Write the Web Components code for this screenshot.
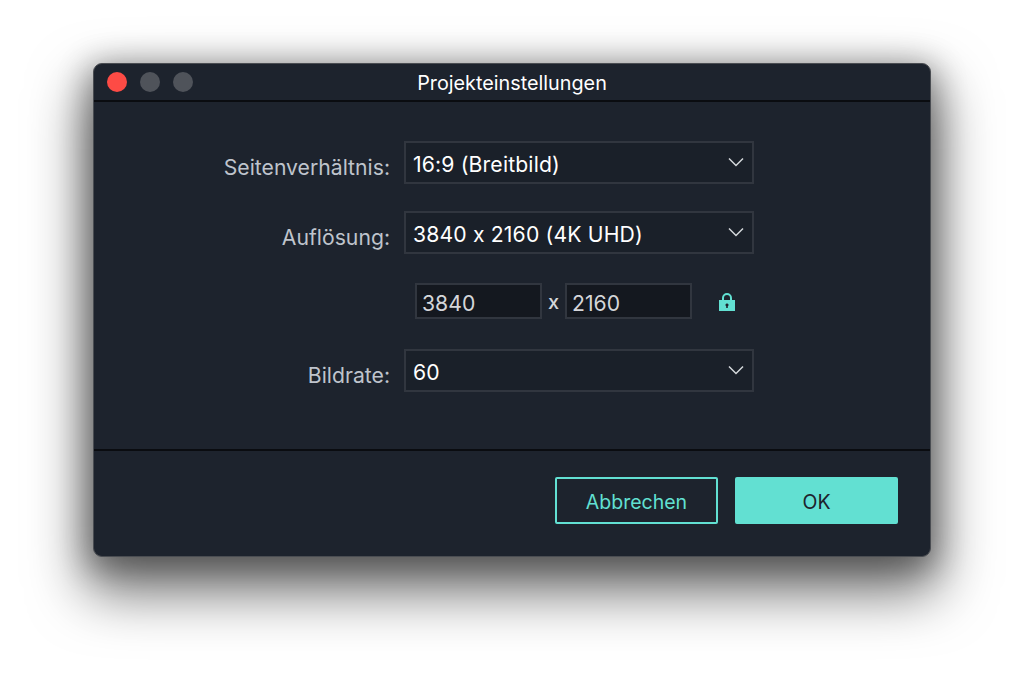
<!DOCTYPE html>
<html lang="de">
<head>
<meta charset="utf-8">
<title>Projekteinstellungen</title>
<style>
  html, body { margin: 0; height: 100%; background: #fff; }
  body { font-family: Inter, "Noto Sans", sans-serif; font-variant-ligatures: no-contextual; overflow: hidden; }
</style>
</head>
<body>
<settings-window title-text="Projekteinstellungen">
  <form-row label="Seitenverhältnis:"><select-box>16:9 (Breitbild)</select-box></form-row>
  <form-row label="Auflösung:"><select-box>3840 x 2160 (4K UHD)</select-box></form-row>
  <size-row width-value="3840" height-value="2160"></size-row>
  <form-row label="Bildrate:"><select-box>60</select-box></form-row>
  <dialog-button slot="footer">Abbrechen</dialog-button>
  <dialog-button slot="footer" primary>OK</dialog-button>
</settings-window>

<script>
class SettingsWindow extends HTMLElement {
  connectedCallback() {
    this.attachShadow({ mode: "open" });
    this.shadowRoot.innerHTML = `
      <style>
        :host { display: block; padding: 63px 93px 0; }
        .win {
          width: 838px; height: 494px; box-sizing: border-box;
          display: flex; flex-direction: column;
          background: #1d232d; color: #fff;
          border-radius: 9px;
          border: 1px solid #4a4d52;
          box-shadow: 0 28px 55px 8px rgba(0,0,0,.55), 0 6px 30px 6px rgba(0,0,0,.3);
          overflow: hidden;
        }
        .bar {
          height: 36px; flex: none; position: relative; box-sizing: content-box;
          display: flex; align-items: center; justify-content: center;
          border-bottom: 2px solid #0a0c10;
          font-size: 19.8px;
        }
        .bar span { padding-top: 2px; }
        .lights { position: absolute; left: 13px; top: 8px; display: flex; gap: 13px; }
        .lights i { width: 20px; height: 20px; border-radius: 50%; background: #4f535a; }
        .lights i:first-child { background: #fd4b45; }
        .body {
          flex: none; height: 349px; box-sizing: border-box;
          padding-top: 39px;
          display: flex; flex-direction: column; gap: 27px;
          border-bottom: 2px solid #0a0c10;
        }
        .foot {
          flex: 1; display: flex; justify-content: flex-end; align-items: flex-start;
          gap: 17px; padding: 26px 32px 0 0;
        }
      </style>
      <div class="win">
        <div class="bar">
          <div class="lights"><i></i><i></i><i></i></div>
          <span>${this.getAttribute("title-text")}</span>
        </div>
        <div class="body"><slot></slot></div>
        <div class="foot"><slot name="footer"></slot></div>
      </div>
    `;
  }
}

class FormRow extends HTMLElement {
  connectedCallback() {
    this.attachShadow({ mode: "open" });
    this.shadowRoot.innerHTML = `
      <style>
        :host { display: flex; align-items: center; gap: 14px; }
        label { width: 296px; text-align: right; font-size: 21.2px; color: #bfc4cc; padding-top: 8px; flex: none; }
      </style>
      <label>${this.getAttribute("label")}</label>
      <slot></slot>
    `;
  }
}

class SelectBox extends HTMLElement {
  connectedCallback() {
    this.attachShadow({ mode: "open" });
    this.shadowRoot.innerHTML = `
      <style>
        :host {
          display: flex; align-items: center; justify-content: space-between;
          width: 350px; height: 43px; box-sizing: border-box;
          padding: 2px 7px 0 7px;
          background: #1a2029; border: 2px solid #31363f;
          font-size: 21.2px; letter-spacing: .15px; color: #fff;
        }
        svg { width: 18px; height: 10px; margin-top: -4px; }
      </style>
      <slot></slot>
      <svg viewBox="0 0 18 10" fill="none" stroke="#d5d8dc" stroke-width="1.5"><path d="M2 1.500 9 8.500 16 1.500"/></svg>
    `;
  }
}

class SizeRow extends HTMLElement {
  connectedCallback() {
    this.attachShadow({ mode: "open" });
    this.shadowRoot.innerHTML = `
      <style>
        :host { display: flex; align-items: center; height: 36px; margin: 2px 0 3px; padding-left: 321px; }
        .field {
          width: 127px; height: 36px; box-sizing: border-box;
          display: flex; align-items: center; padding: 4px 5px 0;
          background: #14181f; border: 2px solid #31363f;
          font-size: 21.2px; color: #d4d6da;
        }
        .x { width: 23px; text-align: center; font-size: 20px; font-weight: 500; color: #d4d6da; padding-top: 1px; }
        svg { width: 18px; height: 20px; margin: 1px 0 0 26px; }
      </style>
      <div class="field">${this.getAttribute("width-value")}</div>
      <span class="x">x</span>
      <div class="field">${this.getAttribute("height-value")}</div>
      <svg viewBox="0 0 18 20">
        <path d="M5 9V6a4 4 0 0 1 8 0v3" fill="none" stroke="#62e0d2" stroke-width="2"/>
        <path fill="#62e0d2" fill-rule="evenodd" d="M1 8h16v11H1zM9 11.500a1.500 1.500 0 0 0-.8 2.800V16h1.600v-1.700A1.500 1.500 0 0 0 9 11.500z"/>
      </svg>
    `;
  }
}

class DialogButton extends HTMLElement {
  connectedCallback() {
    this.attachShadow({ mode: "open" });
    this.shadowRoot.innerHTML = `
      <style>
        :host {
          display: flex; align-items: center; justify-content: center;
          width: 163px; height: 47px; box-sizing: border-box; padding-top: 2px;
          border: 2px solid #62e0d2; border-radius: 2px;
          color: #62e0d2; font-size: 19.5px;
        }
        :host([primary]) { background: #62e0d2; color: #1d232d; }
      </style>
      <slot></slot>
    `;
  }
}

customElements.define("settings-window", SettingsWindow);
customElements.define("form-row", FormRow);
customElements.define("select-box", SelectBox);
customElements.define("size-row", SizeRow);
customElements.define("dialog-button", DialogButton);
</script>
</body>
</html>
